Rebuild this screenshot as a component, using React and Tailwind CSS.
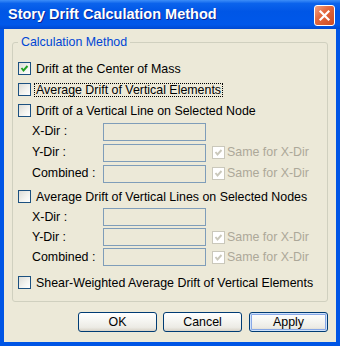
import React from "react";

function Box({ checked, disabled }) {
  return (
    <span
      className={
        "flex h-[13px] w-[13px] shrink-0 items-center justify-center border " +
        (disabled
          ? "border-[#CAC8BB] bg-white"
          : "border-[#1C5180] bg-[linear-gradient(135deg,#DCDCD7_0%,#F4F4F0_60%,#FFFFFF_100%)]")
      }
    >
      {checked && (
        <svg width="11" height="11" viewBox="0 0 11 11">
          <polyline
            points="2.5,5 4.5,7.5 8.5,3"
            fill="none"
            stroke={disabled ? "#CAC8BB" : "#21A121"}
            strokeWidth="1.9"
          />
        </svg>
      )}
    </span>
  );
}

function Option({ checked, focus, children, className = "h-[21px]" }) {
  return (
    <div className={"flex items-center " + className}>
      <Box checked={checked} />
      <span
        className={
          "ml-[3px] border px-[1px] leading-[12px] " +
          (focus ? "border-dotted border-black" : "border-transparent")
        }
      >
        {children}
      </span>
    </div>
  );
}

function Field({ label, same, className = "h-[21px]" }) {
  return (
    <div className={"flex items-center " + className}>
      <span className="w-[85px] pl-[14px]">{label}</span>
      <div className="h-[18px] w-[103px] border border-[#7F9DB9] bg-[#ECE9D8]" />
      {same && (
        <>
          <span className="ml-[6px]">
            <Box checked disabled />
          </span>
          <span className="ml-[2px] text-[#ACA899]">Same for X-Dir</span>
        </>
      )}
    </div>
  );
}

function XpButton({ children, isDefault, className = "" }) {
  return (
    <button
      className={
        "h-[20px] w-[79px] rounded-[3px] border border-[#003C74] bg-[linear-gradient(to_bottom,#FFFFFF_0%,#F5F5F1_45%,#ECEBE5_80%,#D8D2C6_100%)] leading-[16px] text-black " +
        (isDefault ? "[box-shadow:inset_0_0_0_1px_#CEE1FB,inset_0_0_0_2px_#88A8E6] " : "") +
        className
      }
    >
      {children}
    </button>
  );
}

export default function App() {
  return (
    <div className="flex h-[346px] w-[340px] flex-col bg-[#0055E5] font-['Liberation_Sans',Arial,sans-serif] text-[12.4px] text-black">
      <div className="flex h-[29px] shrink-0 items-center justify-between bg-[linear-gradient(to_bottom,#3D8EF8_0%,#0B63EC_12%,#0056E6_40%,#0058EA_85%,#0049D2_100%)] pl-[8px] pr-[5px]">
        <span className="text-[14.5px] font-bold text-white [text-shadow:1px_1px_#0B2594]">
          Story Drift Calculation Method
        </span>
        <div className="mt-[2px] flex h-[21px] w-[21px] items-center justify-center rounded-[3px] border border-white bg-[linear-gradient(135deg,#EFA285_0%,#E4693F_40%,#CC4B22_100%)]">
          <svg width="13" height="13" viewBox="0 0 13 13">
            <path d="M2.5 2.5 L10.5 10.5 M10.5 2.5 L2.5 10.5" stroke="white" strokeWidth="2.2" strokeLinecap="square" />
          </svg>
        </div>
      </div>

      <div className="mx-[4px] mb-[4px] flex flex-1 flex-col bg-[#ECE9D8]">
        <fieldset className="mx-[8px] mt-[6px] h-[267px] rounded-[3px] border border-[#D0D0BF] pb-[8px] pl-[5px] pr-[5px] pt-[9px]">
          <legend className="px-[3px] leading-[14px] text-[#0046D5]">Calculation Method</legend>
          <Option checked>Drift at the Center of Mass</Option>
          <Option focus>Average Drift of Vertical Elements</Option>
          <Option>Drift of a Vertical Line on Selected Node</Option>
          <Field label="X-Dir :" />
          <Field label="Y-Dir :" same />
          <Field label="Combined :" same />
          <Option className="mt-[2px] h-[21px]">Average Drift of Vertical Lines on Selected Nodes</Option>
          <Field label="X-Dir :" className="h-[20px]" />
          <Field label="Y-Dir :" same className="h-[20px]" />
          <Field label="Combined :" same className="h-[20px]" />
          <Option className="mt-[5px] h-[21px]">Shear-Weighted Average Drift of Vertical Elements</Option>
        </fieldset>

        <div className="mr-[8px] mt-[10px] flex justify-end gap-[6px]">
          <XpButton>OK</XpButton>
          <XpButton>Cancel</XpButton>
          <XpButton isDefault className="ml-[1px]">
            Apply
          </XpButton>
        </div>
      </div>
    </div>
  );
}
